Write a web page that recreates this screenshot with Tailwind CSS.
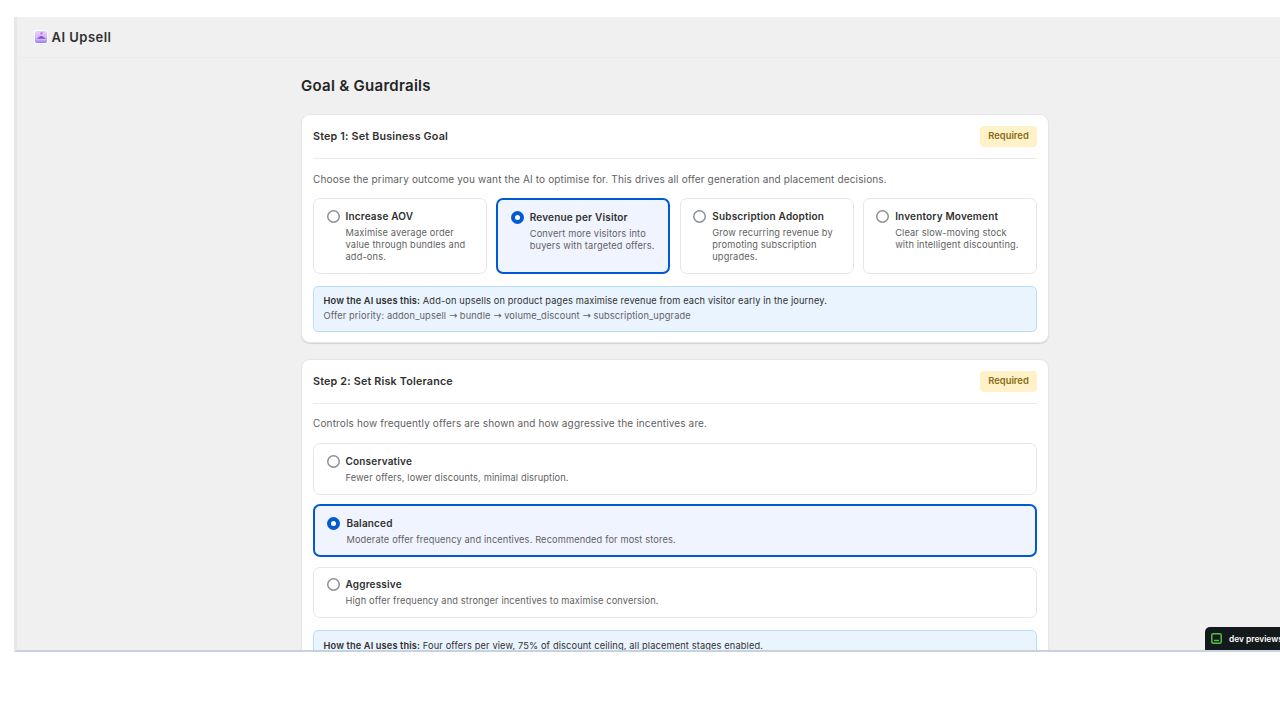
<!DOCTYPE html>
<html lang="en">
<head>
<meta charset="utf-8">
<title>AI Upsell</title>
<script src="https://cdn.jsdelivr.net/npm/@tailwindcss/browser@4"></script>
</head>
<body class="h-[720px] overflow-hidden bg-white pt-[17px] pl-[14px] font-['Inter',sans-serif] text-[#303030]">
<div class="relative h-[635px] overflow-hidden border-b-2 border-l-[3px] border-b-[#c6d2df] border-l-[#e7e7e7] bg-[#f0f0f0]">
  <header class="flex h-[41px] items-center gap-[4px] border-b border-[#ececec] pl-[16.500px]">
    <svg class="size-[14px] shrink-0" viewBox="0 0 14 14">
      <defs><linearGradient id="g" x1="0" y1="0" x2="0" y2="1"><stop offset="0" stop-color="#e6d2fb"/><stop offset=".55" stop-color="#d3b5fb"/><stop offset="1" stop-color="#8f80f6"/></linearGradient></defs>
      <rect width="14" height="14" rx="3" fill="#fafafa"/>
      <rect x="1" y="1" width="12" height="12" rx="2" fill="url(#g)"/>
      <path d="M2.500 8.800Q4.500 8.200 5.800 6.600Q7 5.400 8.400 6.200L11.800 8.800Z" fill="#8a4be0"/>
      <circle cx="7.500" cy="3.300" r="1.200" fill="#c37aec"/>
      <path d="M2 9.800h10" stroke="#ddd0ff" stroke-width=".8"/>
    </svg>
    <span class="text-[13px] leading-5 font-semibold tracking-[.48px]">AI Upsell</span>
  </header>
  <main class="ml-[284px] w-[748px]">
    <h1 class="flex h-[56px] items-center text-[15px] font-semibold tracking-[.28px] text-[#242424]">Goal &amp; Guardrails</h1>

    <section class="h-[229px] rounded-[9px] border border-[#e6e6e6] bg-white px-[11px] shadow-[0_1px_1px_#00000020]">
      <div class="flex h-[44px] items-center justify-between border-b border-[#ebebeb]">
        <h2 class="pt-[1px] text-[10.75px] font-semibold tracking-[.18px]">Step 1: Set Business Goal</h2>
        <span class="flex h-[21px] w-[57px] items-center justify-center rounded-[4px] bg-[#fff1c8] text-[9.4px] font-semibold text-[#8a6a12]">Required</span>
      </div>
      <p class="flex h-[39px] items-center pt-[1px] text-[10px] tracking-[.145px] text-[#616161]">Choose the primary outcome you want the AI to optimise for. This drives all offer generation and placement decisions.</p>
      <div class="grid h-[75.5px] grid-cols-4 gap-[9.500px]">
        <div class="flex gap-[6px] rounded-[7px] border border-[#e6e6e6] pt-[10.500px] pl-[12.500px]">
          <span class="size-[13px] shrink-0 rounded-full shadow-[inset_0_0_0_1.5px_#8a8f94]"></span>
          <div><h3 class="text-[10px] leading-[13px] font-semibold tracking-[.18px]">Increase AOV</h3>
          <p class="mt-[4px] text-[9.25px] leading-[12px] tracking-[.14px] whitespace-nowrap text-[#616161]">Maximise average order<br>value through bundles and<br>add-ons.</p></div>
        </div>
        <div class="flex gap-[6px] rounded-[7px] border-2 border-[#005bd3] bg-[#f0f4ff] pt-[10.500px] pl-[12.400px]">
          <span class="size-[13px] shrink-0 rounded-full border-4 border-[#005bd3] bg-white"></span>
          <div><h3 class="text-[10px] leading-[13px] font-semibold tracking-[.18px]">Revenue per Visitor</h3>
          <p class="mt-[4px] text-[9.25px] leading-[12px] tracking-[.14px] whitespace-nowrap text-[#616161]">Convert more visitors into<br>buyers with targeted offers.</p></div>
        </div>
        <div class="flex gap-[6px] rounded-[7px] border border-[#e6e6e6] pt-[10.500px] pl-[12.500px]">
          <span class="size-[13px] shrink-0 rounded-full shadow-[inset_0_0_0_1.5px_#8a8f94]"></span>
          <div><h3 class="text-[10px] leading-[13px] font-semibold tracking-[.18px]">Subscription Adoption</h3>
          <p class="mt-[4px] text-[9.25px] leading-[12px] tracking-[.14px] whitespace-nowrap text-[#616161]">Grow recurring revenue by<br>promoting subscription<br>upgrades.</p></div>
        </div>
        <div class="flex gap-[6px] rounded-[7px] border border-[#e6e6e6] pt-[10.500px] pl-[12px]">
          <span class="size-[13px] shrink-0 rounded-full shadow-[inset_0_0_0_1.5px_#8a8f94]"></span>
          <div><h3 class="text-[10px] leading-[13px] font-semibold tracking-[.18px]">Inventory Movement</h3>
          <p class="mt-[4px] text-[9.25px] leading-[12px] tracking-[.14px] whitespace-nowrap text-[#616161]">Clear slow-moving stock<br>with intelligent discounting.</p></div>
        </div>
      </div>
      <div class="mt-[12px] h-[46px] rounded-[5px] border border-[#b9dcfb] bg-[#eaf4ff] px-[9.500px] pt-[6.5px] text-[9.25px] leading-[15px] tracking-[.13px]">
        <p><b class="font-semibold">How the AI uses this:</b> Add-on upsells on product pages maximise revenue from each visitor early in the journey.</p>
        <p class="text-[#616161]">Offer priority: addon_upsell <span class="font-['DejaVu_Sans'] text-[9.8px] leading-none tracking-normal">→</span> bundle <span class="font-['DejaVu_Sans'] text-[9.8px] leading-none tracking-normal">→</span> volume_discount <span class="font-['DejaVu_Sans'] text-[9.8px] leading-none tracking-normal">→</span> subscription_upgrade</p>
      </div>
    </section>

    <section class="mt-[16px] h-[340px] rounded-[9px] border border-[#e6e6e6] bg-white px-[11px]">
      <div class="flex h-[44px] items-center justify-between border-b border-[#ebebeb]">
        <h2 class="pt-[1px] text-[10.75px] font-semibold tracking-[.18px]">Step 2: Set Risk Tolerance</h2>
        <span class="flex h-[21px] w-[57px] items-center justify-center rounded-[4px] bg-[#fff1c8] text-[9.4px] font-semibold text-[#8a6a12]">Required</span>
      </div>
      <p class="flex h-[39px] items-center text-[10px] tracking-[.145px] text-[#616161]">Controls how frequently offers are shown and how aggressive the incentives are.</p>
      <div class="flex flex-col gap-[9.5px]">
        <div class="flex h-[51.5px] gap-[6px] rounded-[7px] border border-[#e6e6e6] pt-[10.500px] pl-[12.500px]">
          <span class="size-[13px] shrink-0 rounded-full shadow-[inset_0_0_0_1.5px_#8a8f94]"></span>
          <div><h3 class="text-[10px] leading-[13px] font-semibold tracking-[.18px]">Conservative</h3>
          <p class="mt-[4px] text-[9.25px] leading-[12px] tracking-[.13px] text-[#616161]">Fewer offers, lower discounts, minimal disruption.</p></div>
        </div>
        <div class="flex h-[53px] gap-[6px] rounded-[7px] border-2 border-[#005bd3] bg-[#f0f4ff] pt-[10.500px] pl-[12.400px]">
          <span class="size-[13px] shrink-0 rounded-full border-4 border-[#005bd3] bg-white"></span>
          <div><h3 class="text-[10px] leading-[13px] font-semibold tracking-[.18px]">Balanced</h3>
          <p class="mt-[4px] text-[9.25px] leading-[12px] tracking-[.13px] text-[#616161]">Moderate offer frequency and incentives. Recommended for most stores.</p></div>
        </div>
        <div class="flex h-[51.5px] gap-[6px] rounded-[7px] border border-[#e6e6e6] pt-[10.500px] pl-[12.500px]">
          <span class="size-[13px] shrink-0 rounded-full shadow-[inset_0_0_0_1.5px_#8a8f94]"></span>
          <div><h3 class="text-[10px] leading-[13px] font-semibold tracking-[.18px]">Aggressive</h3>
          <p class="mt-[4px] text-[9.25px] leading-[12px] tracking-[.13px] text-[#616161]">High offer frequency and stronger incentives to maximise conversion.</p></div>
        </div>
      </div>
      <div class="mt-[12px] h-[46px] rounded-[5px] border border-[#b9dcfb] bg-[#eaf4ff] px-[9.500px] pt-[7px] text-[9.25px] leading-[15px] tracking-[.13px]">
        <p><b class="font-semibold">How the AI uses this:</b> Four offers per view, 75% of discount ceiling, all placement stages enabled.</p>
      </div>
    </section>
  </main>
  <div class="absolute right-0 bottom-0 flex h-[23px] w-[75px] items-center gap-[7px] overflow-hidden rounded-tl-[5px] bg-[#141a1c] pl-[6px] text-[8.4px] font-semibold whitespace-nowrap text-white">
    <svg class="size-[11px] shrink-0" viewBox="0 0 11 11" fill="none" stroke="#4fc13f" stroke-width="1.500"><rect x=".8" y=".8" width="9.400" height="9.400" rx="1.500"/><path d="M3 7.500h5"/></svg>
    <span class="pt-[1px]">dev previews</span>
  </div>
</div>
</body>
</html>
